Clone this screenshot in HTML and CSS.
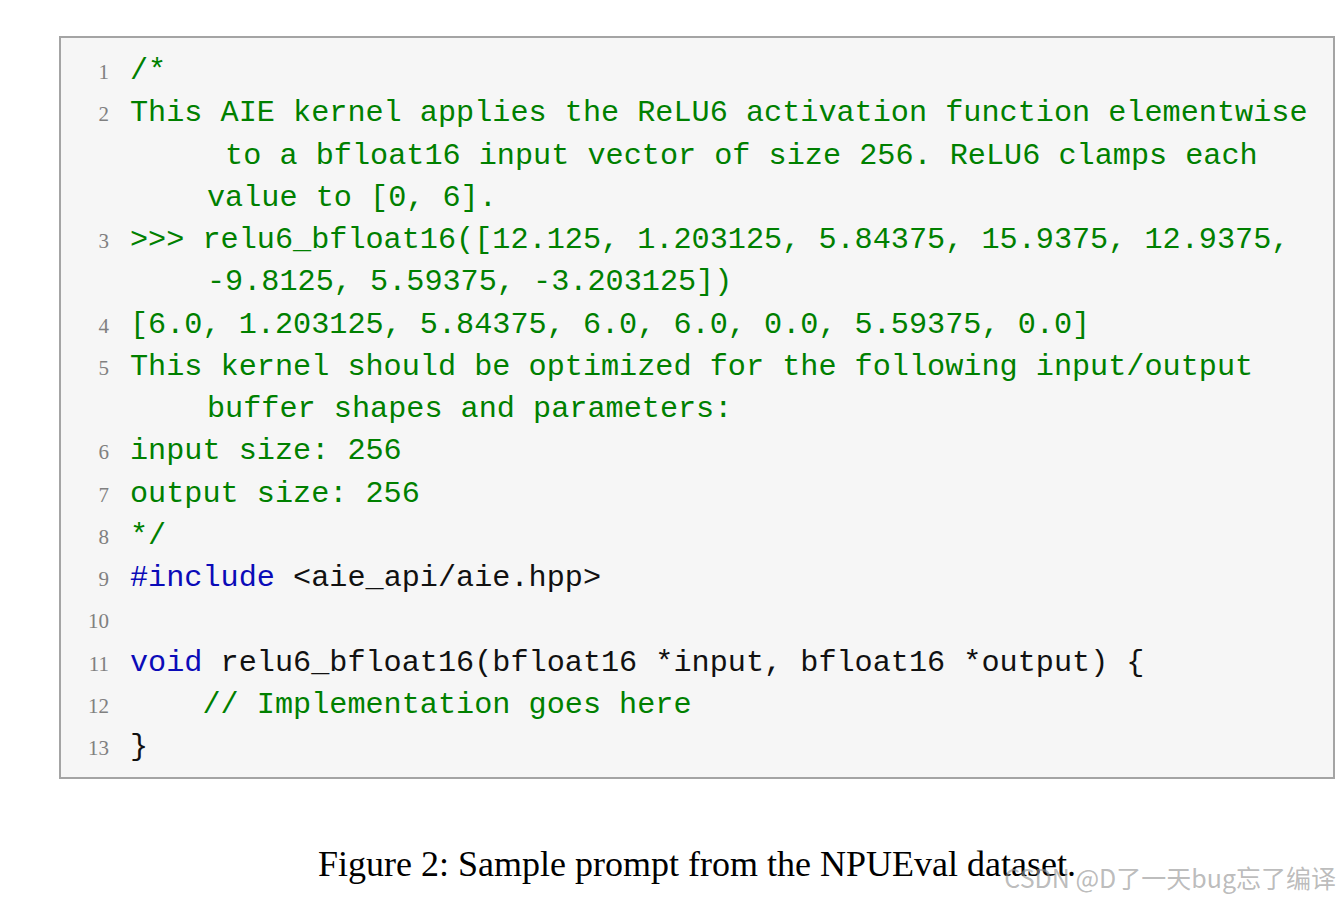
FILE: index.html
```html
<!DOCTYPE html>
<html>
<head>
<meta charset="utf-8">
<link rel="stylesheet" href="styles.css">
</head>
<body>
<div class="page">
  <div class="listing">
    <div class="row"><span class="ln">1</span><div class="code"><div class="l c">/*</div></div></div>
    <div class="row"><span class="ln">2</span><div class="code">
      <div class="l c">This AIE kernel applies the ReLU6 activation function elementwise</div>
      <div class="l c cont"> to a bfloat16 input vector of size 256. ReLU6 clamps each</div>
      <div class="l c cont">value to [0, 6].</div>
    </div></div>
    <div class="row"><span class="ln">3</span><div class="code">
      <div class="l c">&gt;&gt;&gt; relu6_bfloat16([12.125, 1.203125, 5.84375, 15.9375, 12.9375,</div>
      <div class="l c cont">-9.8125, 5.59375, -3.203125])</div>
    </div></div>
    <div class="row"><span class="ln">4</span><div class="code"><div class="l c">[6.0, 1.203125, 5.84375, 6.0, 6.0, 0.0, 5.59375, 0.0]</div></div></div>
    <div class="row"><span class="ln">5</span><div class="code">
      <div class="l c">This kernel should be optimized for the following input/output</div>
      <div class="l c cont">buffer shapes and parameters:</div>
    </div></div>
    <div class="row"><span class="ln">6</span><div class="code"><div class="l c">input size: 256</div></div></div>
    <div class="row"><span class="ln">7</span><div class="code"><div class="l c">output size: 256</div></div></div>
    <div class="row"><span class="ln">8</span><div class="code"><div class="l c">*/</div></div></div>
    <div class="row"><span class="ln">9</span><div class="code"><div class="l"><span class="kw">#include</span> &lt;aie_api/aie.hpp&gt;</div></div></div>
    <div class="row"><span class="ln">10</span><div class="code"><div class="l"> </div></div></div>
    <div class="row"><span class="ln">11</span><div class="code"><div class="l"><span class="kw">void</span> relu6_bfloat16(bfloat16 *input, bfloat16 *output) {</div></div></div>
    <div class="row"><span class="ln">12</span><div class="code"><div class="l">    <span class="cm">// Implementation goes here</span></div></div></div>
    <div class="row"><span class="ln">13</span><div class="code"><div class="l">}</div></div></div>
  </div>
  <p class="caption">Figure 2: Sample prompt from the NPUEval dataset.</p>
  <div class="watermark">CSDN @D了一天bug忘了编译</div>
</div>
</body>
</html>
```
FILE: styles.css
```css
html, body {
  margin: 0;
  padding: 0;
  background: #ffffff;
}

.page {
  position: relative;
  width: 1340px;
  height: 901px;
  padding-top: 36px;
  box-sizing: border-box;
  overflow: hidden;
}

.listing {
  margin-left: 59px;
  width: 1276px;
  box-sizing: border-box;
  border: 2px solid #a4a4a4;
  background: #f6f6f6;
  padding: 12px 0 9px 0;
}

.row {
  display: flex;
  align-items: baseline;
}

.ln {
  width: 48px;
  flex: none;
  text-align: right;
  margin-right: 21px;
  font-family: "Liberation Serif", serif;
  font-size: 21px;
  color: #808080;
}

.code {
  flex: 1;
  font-family: "Liberation Mono", monospace;
  font-size: 30.2px;
  color: #111111;
}

.l {
  white-space: pre;
  height: 42.25px;
  line-height: 42.25px;
}

.c, .cm {
  color: #008000;
}

.kw {
  color: #0b0bb8;
}

.cont {
  padding-left: 77px;
}

.caption {
  margin: 65px 0 0 59px;
  width: 1276px;
  text-align: center;
  font-family: "Liberation Serif", serif;
  font-size: 36px;
  line-height: 40px;
  color: #000000;
}

.watermark {
  position: absolute;
  right: 4px;
  top: 861px;
  font-family: "Noto Sans CJK SC", "Noto Sans", sans-serif;
  font-size: 25px;
  line-height: 32px;
  color: rgba(150, 150, 150, 0.65);
  white-space: nowrap;
}
```
